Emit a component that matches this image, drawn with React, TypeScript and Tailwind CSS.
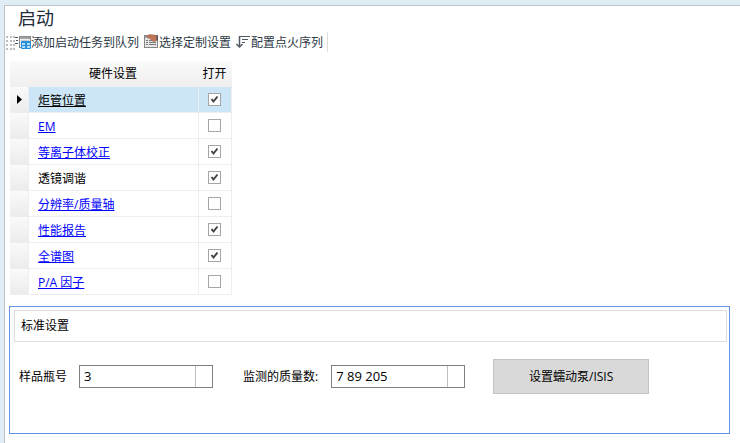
import { useState } from 'react';

type Task = { name: string; link: boolean; on: boolean };

const initialTasks: Task[] = [
  { name: '炬管位置', link: true, on: true },
  { name: 'EM', link: true, on: false },
  { name: '等离子体校正', link: true, on: true },
  { name: '透镜调谐', link: false, on: true },
  { name: '分辨率/质量轴', link: true, on: false },
  { name: '性能报告', link: true, on: true },
  { name: '全谱图', link: true, on: true },
  { name: 'P/A 因子', link: true, on: false },
];

function Grip() {
  return (
    <svg width="14" height="16" viewBox="0 0 14 16" className="shrink-0" shapeRendering="crispEdges">
      {[2, 6, 10, 14].map((y) => (
        <g key={y} fill="#bdbdbd">
          <rect x="1" y={y} width="2" height="2" />
          <rect x="5" y={y} width="2" height="2" />
          <rect x="8" y={y} width="2" height="2" />
        </g>
      ))}
    </svg>
  );
}

function QueueIcon() {
  return (
    <svg width="16" height="16" viewBox="0 0 16 16" className="shrink-0">
      <path d="M0 3.5h3M1 6.5h2M0 9.5h3" stroke="#4b5563" />
      <rect x="4.5" y="2.5" width="11" height="11" fill="#f1f1f1" stroke="#8a8a8a" />
      <rect x="5" y="3" width="10" height="2" fill="#a3a3a3" />
      <path d="M6 6.5h8" stroke="#cccccc" />
      <rect x="6" y="7" width="10" height="8" rx="1" fill="#2492e0" />
      <path d="M7 9h3v2H7zM12 9h3v2h-3zM7 12h3v2H7zM12 12h3v2h-3z" fill="#b4dcf7" />
    </svg>
  );
}

function CustomizeIcon() {
  return (
    <svg width="16" height="16" viewBox="0 0 16 16" className="shrink-0">
      <rect x="1.5" y="1.5" width="13" height="12" fill="#e6e6e6" stroke="#858585" />
      <path d="M2 3h12" stroke="#a0a0a0" strokeWidth="2" />
      <path d="M3 6.5h2M6 6.5h7M3 8.5h2M6 8.5h7M3 10.5h2M6 10.5h7" stroke="#777777" />
      <path d="M4 2 6.5.5 11 1l3 1v4l-2 1.5L9 7 7.5 5 5 4z" fill="#bd7555" stroke="#a3654a" strokeWidth="0.5" />
      <path d="M13.5 1.5H15v5h-1.5z" fill="#505761" />
    </svg>
  );
}

function SortIcon() {
  return (
    <svg width="16" height="16" viewBox="0 0 16 16" className="shrink-0" fill="none" stroke="#505a64">
      <path d="M4.5 2v11" strokeWidth="1.5" />
      <path d="M1.5 10l3 3 3-3" strokeWidth="1.5" />
      <path d="M5 2.5h10M7 5.5h6M7 8.5h3" />
    </svg>
  );
}

function CheckBox({ label, checked, onChange }: { label: string; checked: boolean; onChange: () => void }) {
  return (
    <label className="relative mx-auto block size-[13px]">
      <input
        type="checkbox"
        aria-label={label}
        checked={checked}
        onChange={onChange}
        className="block size-full appearance-none border border-[#a6a6a6] bg-white"
      />
      {checked && (
        <svg viewBox="0 0 13 13" className="pointer-events-none absolute inset-0 size-full">
          <path d="M3.5 6 5.5 8.5 9.5 3.5" fill="none" stroke="#444444" strokeWidth="2" />
        </svg>
      )}
    </label>
  );
}

function ValueBox({ id, value, onChange }: { id: string; value: string; onChange: (v: string) => void }) {
  return (
    <div className="flex h-[23px] w-[134px] border border-[#808080] bg-white">
      <input
        id={id}
        value={value}
        onChange={(e) => onChange(e.target.value)}
        className="min-w-0 flex-1 px-1 text-[13px] outline-none"
      />
      <span className="w-[17px] border-l border-[#c0c0c0]" />
    </div>
  );
}

export default function App() {
  const [tasks, setTasks] = useState(initialTasks);
  const [selected, setSelected] = useState(0);
  const [vial, setVial] = useState('3');
  const [masses, setMasses] = useState('7 89 205');

  const toggle = (index: number) => {
    setTasks(tasks.map((t, i) => (i === index ? { ...t, on: !t.on } : t)));
  };

  return (
    <div className="flex min-h-screen flex-col bg-[#e1edf4] pt-[5px] pl-1 font-['Open_Sans','Noto_Sans_CJK_SC',sans-serif] text-xs text-black">
      <main className="flex-1 border-t border-l border-[#bcc3c9] bg-white pb-2">
        <h1 className="px-[13px] text-lg leading-6 text-[#222c38]">启动</h1>

        <div className="mt-[2px] flex h-5 w-fit items-center border-r border-[#dcdcdc] pr-1 text-[#2c3845]">
          <Grip />
          <div className="-ml-1 flex items-center gap-1">
            <button className="flex items-center whitespace-nowrap">
              <QueueIcon />
              <span className="pt-0.5">添加启动任务到队列</span>
            </button>
            <button className="flex items-center whitespace-nowrap">
              <CustomizeIcon />
              <span className="pt-0.5">选择定制设置</span>
            </button>
            <button className="flex items-center whitespace-nowrap">
              <SortIcon />
              <span className="pt-0.5">配置点火序列</span>
            </button>
          </div>
        </div>

        <table className="mt-[9px] ml-[5px] w-[222px] table-fixed border-separate border-spacing-0">
          <colgroup>
            <col className="w-[19px]" />
            <col />
            <col className="w-[33px]" />
          </colgroup>
          <thead>
            <tr className="h-[26px] bg-linear-to-b from-[#fafafa] to-[#efefef]">
              <th />
              <th className="p-0 pr-0.5 font-normal">硬件设置</th>
              <th className="p-0 pr-0.5 font-normal">打开</th>
            </tr>
          </thead>
          <tbody>
            {tasks.map((task, i) => (
              <tr key={task.name} onClick={() => setSelected(i)} className={i === selected ? 'bg-[#cde6f7]' : 'bg-white'}>
                <td className="h-[26px] border-r border-b border-[#eeeeee] bg-linear-to-b from-[#fafafa] to-[#ececec] p-0">
                  {i === selected && (
                    <svg width="5" height="9" viewBox="0 0 5 9" className="mx-auto">
                      <path d="M0 0v9l5-4.5z" />
                    </svg>
                  )}
                </td>
                <td className="border-r border-b border-[#eeeeee] px-[9px] pt-0.5 pb-0">
                  {task.link ? (
                    <a href="#" className={i === selected ? 'text-black underline' : 'text-[#0000ff] underline'}>
                      {task.name}
                    </a>
                  ) : (
                    task.name
                  )}
                </td>
                <td className="border-r border-b border-[#eeeeee] p-0 pr-0.5">
                  <CheckBox label={task.name} checked={task.on} onChange={() => toggle(i)} />
                </td>
              </tr>
            ))}
          </tbody>
        </table>

        <section className="mt-[11px] mr-[10px] ml-1 min-h-32 border border-[#6495e0] px-1 pt-[3px]">
          <h2 className="mr-[-2px] flex h-8 items-center border border-[#dddddd] px-1.5">标准设置</h2>
          <div className="mt-[17px] flex items-center pl-[5px]">
            <div className="flex items-center gap-3">
              <label htmlFor="vial">样品瓶号</label>
              <ValueBox id="vial" value={vial} onChange={setVial} />
            </div>
            <div className="ml-[30px] flex items-center gap-[13px]">
              <label htmlFor="masses">监测的质量数:</label>
              <ValueBox id="masses" value={masses} onChange={setMasses} />
            </div>
            <button className="ml-7 h-[35px] w-[156px] border border-[#c3c3c3] bg-[#d9d9d9]">设置蠕动泵/ISIS</button>
          </div>
        </section>
      </main>
    </div>
  );
}
